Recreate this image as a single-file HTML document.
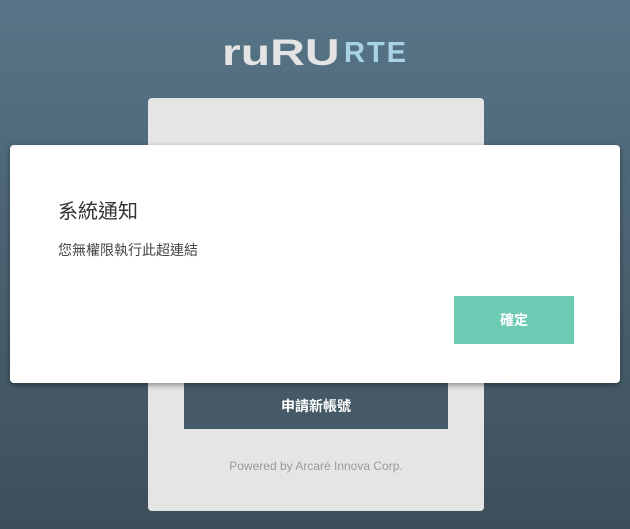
<!DOCTYPE html>
<html><head><meta charset="utf-8">
<style>
html,body{margin:0;padding:0;width:630px;height:529px;overflow:hidden;}
body{background:linear-gradient(#577587,#3d4e5a);position:relative;font-family:"Liberation Sans","Noto Sans CJK TC",sans-serif;}
.a{position:absolute;left:222px;top:34px;font:bold 37px/1 "Liberation Sans",sans-serif;color:#e4e4e4;transform:scaleX(1.3);transform-origin:left;white-space:nowrap;}
.b{position:absolute;left:344px;top:39px;font:bold 29px/1 "Liberation Sans",sans-serif;color:#a9d2e6;letter-spacing:2px;white-space:nowrap;}
.card{position:absolute;left:148px;top:98px;width:336px;height:413px;background:#e5e5e5;border-radius:4px;}
.reg{position:absolute;left:36px;top:285px;width:264px;height:46px;background:#455a66;color:#fff;font-size:14px;font-weight:bold;text-align:center;line-height:46px;}
.pw{position:absolute;left:0;width:336px;top:361px;text-align:center;font-size:12px;color:#9a9a9a;}
.dlg{position:absolute;left:10px;top:145px;width:610px;height:238px;background:#fff;border-radius:4px;box-shadow:0 2px 6px rgba(0,0,0,.4);}
.t{position:absolute;left:48px;top:50px;font-size:20px;color:#333;}
.m{position:absolute;left:48px;top:95px;font-size:14px;color:#444;}
.ok{position:absolute;left:444px;top:151px;width:120px;height:48px;background:#6dcab3;color:#fff;font-size:14px;font-weight:bold;text-align:center;line-height:48px;}
</style></head><body>
<div class="a">ruRU</div><div class="b">RTE</div>
<div class="card"><div class="reg">申請新帳號</div><div class="pw">Powered by Arcaré Innova Corp.</div></div>
<div class="dlg"><div class="t">系統通知</div><div class="m">您無權限執行此超連結</div><div class="ok">確定</div></div>
</body></html>
